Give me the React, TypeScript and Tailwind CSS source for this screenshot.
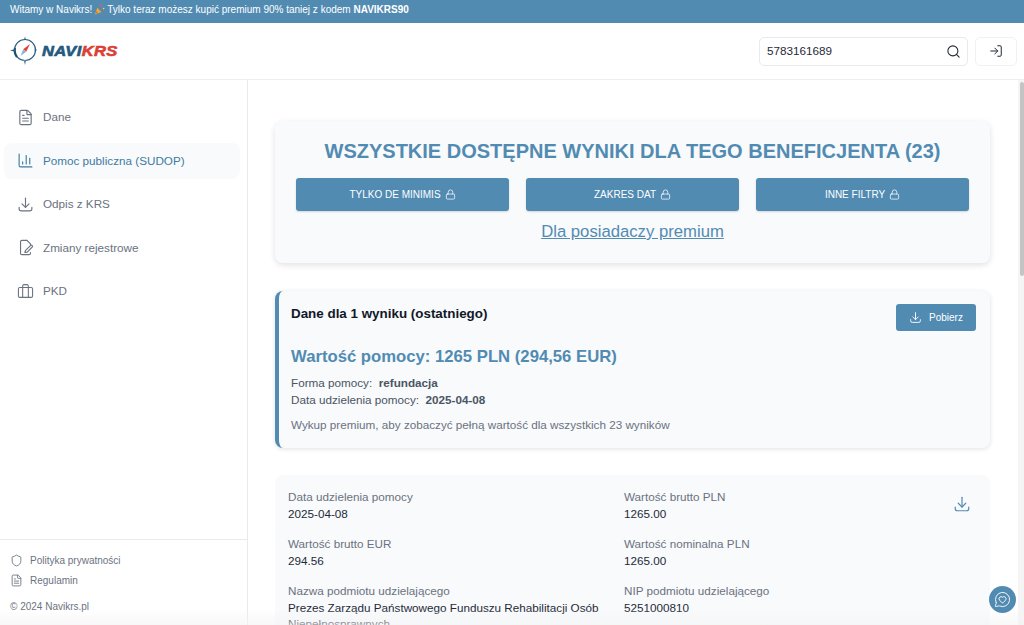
import React from "react";
import { ChartColumn, FileText, Lock, LogIn, MessageCircleHeart, Search, Shield } from "lucide-react";

function DownloadIcon({ size, strokeWidth, className }: { size: number; strokeWidth: number; className?: string }) {
  return (
    <svg width={size} height={size} viewBox="0 0 24 24" fill="none" stroke="currentColor" strokeWidth={strokeWidth} strokeLinecap="round" strokeLinejoin="round" className={className}>
      <path d="M12 3v13" />
      <path d="M7 11l5 5 5-5" />
      <path d="M3 16v2a3 3 0 0 0 3 3h12a3 3 0 0 0 3-3v-2" />
    </svg>
  );
}

function FilePenIcon() {
  return (
    <svg width="17" height="17" viewBox="0 0 24 24" fill="none" stroke="currentColor" strokeWidth="1.6" strokeLinecap="round" strokeLinejoin="round">
      <path d="M14 2H7a2 2 0 0 0-2 2v16a2 2 0 0 0 2 2h10a2 2 0 0 0 2-2v-1" />
      <path d="M14 2l5 5v1" />
      <path d="M11 19l1-3 7.5-7a1.6 1.6 0 0 1 2.2 2.2L14.5 18.5z" />
    </svg>
  );
}

function CaseIcon() {
  return (
    <svg width="18" height="18" viewBox="0 0 24 24" fill="none" stroke="currentColor" strokeWidth="1.5" strokeLinecap="round" strokeLinejoin="round">
      <rect x="2" y="7" width="20" height="14" rx="2" />
      <path d="M8 21V5a2 2 0 0 1 2-2h4a2 2 0 0 1 2 2v16" />
    </svg>
  );
}

function Popper() {
  return (
    <svg width="11" height="11" viewBox="0 0 12 12" className="inline-block mx-[2px] align-[-1px]">
      <path d="M1 11.5L3.6 4l4.6 4.6z" fill="#e8a93a" />
      <path d="M2.4 7.8l2 2-1.2.5-1.3-1.3z" fill="#d9622b" />
      <circle cx="8" cy="2" r="1" fill="#e05a7a" />
      <circle cx="10.5" cy="5" r="0.9" fill="#f3d04e" />
      <path d="M5.5 1l.8 2.4M9 7l2.4.4" stroke="#d9622b" strokeWidth="0.9" />
    </svg>
  );
}

function Logo() {
  return (
    <div className="flex items-center">
      <svg width="32" height="30" viewBox="0 0 32 30" className="ml-[9px]">
        <circle cx="16" cy="14" r="10.5" fill="none" stroke="#2f5d80" strokeWidth="1.2" />
        <path d="M8 21a10.5 10.5 0 0 1-2-9" fill="none" stroke="#1f4f73" strokeWidth="2.2" />
        <path d="M1 14.5l5-1.4v2.6z" fill="#2f5d80" />
        <path d="M24.5 14l3-.8v1.6z" fill="#2f5d80" />
        <path d="M16 29l-1.4-5h2.8z" fill="#5d86a3" />
        <path d="M16 0.5l-1 3.5h2z" fill="#2f5d80" />
        <path d="M21 8l-6.8 5.2 3 2.6z" fill="#e5423a" />
        <path d="M11.5 20l2.7-6.8 3 2.6z" fill="#8fb6d1" />
      </svg>
      <span className="ml-[1px] inline-block origin-left scale-x-[1.14] text-[14.5px] font-bold italic leading-none tracking-[0.3px] text-[#235a80] [-webkit-text-stroke:0.6px_#235a80]">
        NAVI<span className="text-[#dc3f36] [-webkit-text-stroke:0.6px_#dc3f36]">KRS</span>
      </span>
    </div>
  );
}

const navItems = [
  { label: "Dane", icon: <FileText size={17} strokeWidth={1.6} /> },
  { label: "Pomoc publiczna (SUDOP)", icon: <ChartColumn size={17} strokeWidth={1.6} />, active: true },
  { label: "Odpis z KRS", icon: <DownloadIcon size={17} strokeWidth={1.6} /> },
  { label: "Zmiany rejestrowe", icon: <FilePenIcon /> },
  { label: "PKD", icon: <CaseIcon /> },
];

const filters = ["TYLKO DE MINIMIS", "ZAKRES DAT", "INNE FILTRY"];

function Field({ label, value }: { label: string; value: string }) {
  return (
    <div>
      <div className="text-[11.7px] leading-[17.5px] text-[#6b7280]">{label}</div>
      <div className="text-[11.7px] leading-[16.5px] text-[#1f2937]">{value}</div>
    </div>
  );
}

export default function App() {
  return (
    <div className="relative flex h-[625px] w-[1024px] flex-col overflow-hidden bg-white font-['Liberation_Sans',Arial,sans-serif]">
      <div className="flex h-[23px] shrink-0 items-center bg-[#528bb2] pb-[5px] pl-[10px] text-[10px] text-white">
        Witamy w Navikrs!<Popper />Tylko teraz możesz kupić premium 90% taniej z kodem&nbsp;<b>NAVIKRS90</b>
      </div>

      <header className="flex h-[57px] shrink-0 items-center justify-between border-b border-[#eceef1] pr-[7px]">
        <Logo />
        <div className="flex items-center gap-[7px]">
          <div className="flex h-[29px] w-[209px] items-center justify-between rounded-[5px] border border-[#e8eaee] pl-[7px] pr-[6px] text-[11.7px] text-[#1f2937]">
            5783161689
            <Search size={15} strokeWidth={1.7} className="text-[#1f2937]" />
          </div>
          <div className="flex h-[29px] w-[42px] items-center justify-center rounded-[5px] border border-[#f0f1f4]">
            <LogIn size={14} strokeWidth={1.7} className="text-[#1f2937]" />
          </div>
        </div>
      </header>

      <div className="flex min-h-0 flex-1">
        <aside className="flex w-[248px] shrink-0 flex-col justify-between border-r border-[#e8eaee]">
          <nav className="flex flex-col gap-[7.5px] pl-[4px] pr-[7px] pt-[19px]">
            {navItems.map((item) => (
              <div
                key={item.label}
                className={`flex h-[36px] items-center gap-[9px] rounded-[8px] pl-[13px] text-[11.7px] ${
                  item.active ? "bg-[#f8fafc] text-[#3f7ba3]" : "text-[#6b7280]"
                }`}
              >
                <span className="flex w-[17px] justify-center">{item.icon}</span>
                {item.label}
              </div>
            ))}
          </nav>
          <div className="border-t border-[#e8eaee] pb-[11px] pl-[10px] pt-[10px] text-[10px] text-[#6b7280]">
            <div className="flex h-[20px] items-center gap-[7px]">
              <Shield size={13} strokeWidth={1.6} />
              Polityka prywatności
            </div>
            <div className="flex h-[20px] items-center gap-[7px]">
              <FileText size={13} strokeWidth={1.6} />
              Regulamin
            </div>
            <div className="mt-[10px] leading-[14px]">© 2024 Navikrs.pl</div>
          </div>
        </aside>

        <main className="min-w-0 flex-1 overflow-hidden pl-[27px] pr-[28px] pt-[41px]">
          <section className="rounded-[8px] bg-[#f8fafc] px-[21px] pb-[21px] pt-[18px] shadow-[0_2px_6px_rgba(0,0,0,0.12)]">
            <h1 className="text-center text-[20px] font-bold leading-[24px] text-[#528bb2]">
              WSZYSTKIE DOSTĘPNE WYNIKI DLA TEGO BENEFICJENTA (23)
            </h1>
            <div className="mt-[15px] grid grid-cols-3 gap-[17px]">
              {filters.map((f) => (
                <button
                  key={f}
                  className="flex h-[33px] items-center justify-center gap-[4px] rounded-[3px] bg-[#528bb2] text-[10px] text-white shadow-[0_1px_2px_rgba(0,0,0,0.15)]"
                >
                  {f}
                  <Lock size={11} strokeWidth={1.6} />
                </button>
              ))}
            </div>
            <div className="mt-[10px] text-center text-[16.7px] leading-[21px] text-[#528bb2] underline">Dla posiadaczy premium</div>
          </section>

          <section className="mt-[28px] rounded-[8px] border-l-4 border-[#528bb2] bg-[#f8fafc] pb-[15px] pl-[12px] pr-[14px] pt-[14px] shadow-[0_1px_5px_rgba(0,0,0,0.12)]">
            <div className="flex items-start justify-between">
              <h2 className="text-[13.4px] font-bold leading-[17px] text-[#111827]">Dane dla 1 wyniku (ostatniego)</h2>
              <button className="-mt-[1px] flex h-[27px] w-[80px] items-center justify-center gap-[7px] rounded-[3px] bg-[#528bb2] text-[10px] text-white">
                <DownloadIcon size={13} strokeWidth={1.7} />
                Pobierz
              </button>
            </div>
            <div className="mt-[15px] text-[16.7px] font-bold leading-[22px] text-[#528bb2]">Wartość pomocy: 1265 PLN (294,56 EUR)</div>
            <div className="mt-[7px] text-[11.7px] leading-[16.5px] text-[#4b5563]">
              <div>
                Forma pomocy:&nbsp; <b>refundacja</b>
              </div>
              <div>
                Data udzielenia pomocy:&nbsp; <b>2025-04-08</b>
              </div>
            </div>
            <div className="mt-[9px] text-[11.7px] leading-[16px] text-[#6b7280]">Wykup premium, aby zobaczyć pełną wartość dla wszystkich 23 wyników</div>
          </section>

          <section className="relative mt-[27px] rounded-[8px] bg-[#f8fafc] pl-[13px] pr-[16px] pt-[13px]">
            <div className="grid grid-cols-[336px_1fr] gap-y-[13px]">
              <Field label="Data udzielenia pomocy" value="2025-04-08" />
              <Field label="Wartość brutto PLN" value="1265.00" />
              <Field label="Wartość brutto EUR" value="294.56" />
              <Field label="Wartość nominalna PLN" value="1265.00" />
              <Field label="Nazwa podmiotu udzielającego" value="Prezes Zarządu Państwowego Funduszu Rehabilitacji Osób Niepełnosprawnych" />
              <Field label="NIP podmiotu udzielającego" value="5251000810" />
            </div>
            <DownloadIcon size={18} strokeWidth={1.6} className="absolute right-[19px] top-[20px] text-[#528bb2]" />
          </section>
        </main>

        <div className="w-[6px] shrink-0 bg-[#f5f5f5]">
          <div className="ml-[2px] mt-[2px] h-[194px] w-[4px] rounded-full bg-[#c4c4c4]" />
        </div>
      </div>

      <div className="pointer-events-none absolute bottom-0 left-0 h-[16px] w-full bg-gradient-to-b from-transparent to-[#f3f3f3]/60" />

      <div className="absolute bottom-[12px] right-[8px] flex h-[27px] w-[27px] items-center justify-center rounded-full bg-[#528bb2] text-white">
        <MessageCircleHeart size={17} strokeWidth={1.3} />
      </div>
    </div>
  );
}
